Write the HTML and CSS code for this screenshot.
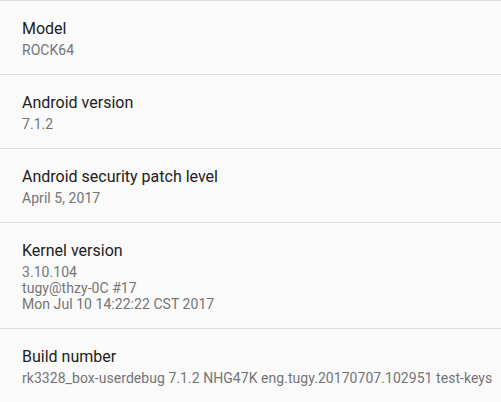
FILE: index.html
```html
<!DOCTYPE html>
<html>
<head>
<meta charset="utf-8">
<link rel="stylesheet" href="styles.css">
</head>
<body>
<div class="list">
  <div class="row">
    <div class="title">Model</div>
    <div class="summary">ROCK64</div>
  </div>
  <div class="row">
    <div class="title">Android version</div>
    <div class="summary">7.1.2</div>
  </div>
  <div class="row">
    <div class="title">Android security patch level</div>
    <div class="summary">April 5, 2017</div>
  </div>
  <div class="row">
    <div class="title">Kernel version</div>
    <div class="summary">3.10.104<br>tugy@thzy-0C #17<br>Mon Jul 10 14:22:22 CST 2017</div>
  </div>
  <div class="row">
    <div class="title">Build number</div>
    <div class="summary">rk3328_box-userdebug 7.1.2 NHG47K eng.tugy.20170707.102951 test-keys</div>
  </div>
</div>
</body>
</html>
```
FILE: styles.css
```css
html, body {
  margin: 0;
  padding: 0;
  background: #fafafa;
}
body {
  width: 501px;
  height: 402px;
  overflow: hidden;
  font-family: Roboto, "Noto Sans", sans-serif;
}
.list {
  display: flex;
  flex-direction: column;
}
.row {
  border-top: 1px solid #dedede;
  padding: 18px 7px 16px 22px;
  display: flex;
  flex-direction: column;
  gap: 3px;
}
.title {
  font-size: 16px;
  line-height: 20px;
  color: #212121;
}
.summary {
  font-size: 14px;
  line-height: 16px;
  color: #757575;
  letter-spacing: 0.05px;
  white-space: nowrap;
}
```
